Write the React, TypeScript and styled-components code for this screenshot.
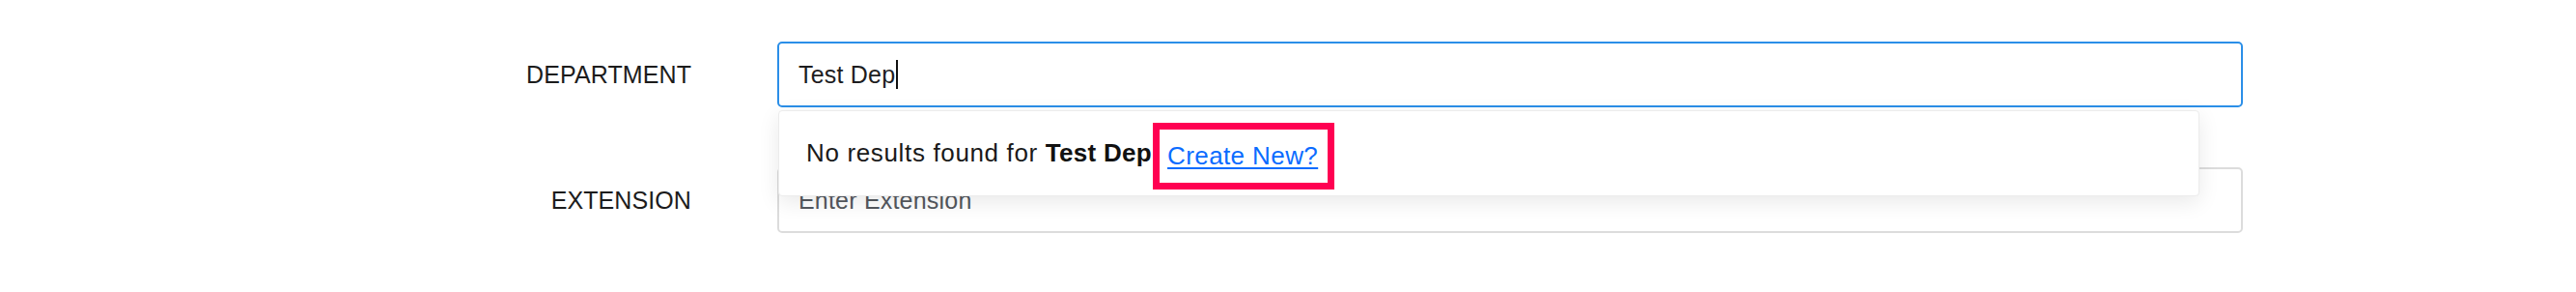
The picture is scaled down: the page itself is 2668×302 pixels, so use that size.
import React from 'react'
import { createGlobalStyle, styled } from 'styled-components'

const GlobalStyle = createGlobalStyle`
  html, body {
    margin: 0;
    padding: 0;
    background: #ffffff;
  }

  body {
    font-family: 'Liberation Sans', Arial, Helvetica, sans-serif;
    color: #212529;
  }
`

type FieldRowProps = {
  label: string
  children: React.ReactNode
}

const FieldRow = ({ label, children }: FieldRowProps) => (
  <>
    <Label>{label}</Label>
    <Field>{children}</Field>
  </>
)

const App = () => {
  const query = 'Test Dep'

  return (
    <>
      <GlobalStyle />
      <Form>
        <FieldRow label='DEPARTMENT'>
          <InputBox $focused>
            <span>{query}</span>
            <Caret />
          </InputBox>
          <Dropdown>
            <DropdownText>
              No results found for <strong>{query}</strong>
              <Highlight>
                <CreateLink href='#'>Create New?</CreateLink>
              </Highlight>
            </DropdownText>
          </Dropdown>
        </FieldRow>
        <FieldRow label='EXTENSION'>
          <InputBox>
            <Placeholder>Enter Extension</Placeholder>
          </InputBox>
        </FieldRow>
      </Form>
    </>
  )
}

const Form = styled.div`
  display: grid;
  grid-template-columns: 716px 1518px;
  grid-auto-rows: 68px;
  column-gap: 89px;
  row-gap: 62px;
  padding-top: 43px;
`

const Label = styled.div`
  align-self: center;
  text-align: right;
  font-size: 25px;
  letter-spacing: 0.1px;
  color: #1c1c1c;
`

const Field = styled.div`
  position: relative;
`

const InputBox = styled.div<{ $focused?: boolean }>`
  box-sizing: border-box;
  height: 68px;
  display: flex;
  align-items: center;
  padding: 0 20px;
  border: 2px solid ${props => (props.$focused ? '#2b8fe8' : '#dcdcdc')};
  border-radius: 5px;
  background: #ffffff;
  font-size: 25px;
  letter-spacing: 0.2px;
  color: #1d1d1f;
`

const Caret = styled.span`
  display: inline-block;
  width: 2px;
  height: 30px;
  margin-left: 1px;
  background: #111111;
`

const Placeholder = styled.span`
  color: #54585e;
`

const Dropdown = styled.div`
  position: absolute;
  z-index: 2;
  top: calc(100% + 3px);
  left: 1px;
  right: 45px;
  height: 89px;
  box-sizing: border-box;
  display: flex;
  align-items: center;
  padding-left: 28px;
  background: #ffffff;
  border: 1px solid #ececec;
  border-radius: 4px;
  box-shadow: 0 6px 22px rgba(0, 0, 0, 0.09);
`

const DropdownText = styled.div`
  display: flex;
  align-items: center;
  font-size: 26px;
  letter-spacing: 0.65px;
  color: #1a1a1a;
  white-space: pre;

  strong {
    font-weight: 700;
    letter-spacing: 0.3px;
    color: #111111;
  }
`

const Highlight = styled.span`
  display: inline-flex;
  align-items: center;
  box-sizing: border-box;
  height: 69px;
  margin-left: 1px;
  margin-top: 5px;
  padding: 0 10px 0 8px;
  border: 7px solid #ff0052;
`

const CreateLink = styled.a`
  color: #0b6cff;
  letter-spacing: 0.4px;
  text-decoration: underline;
  text-underline-offset: 3px;
  text-decoration-thickness: 2px;
`

export default App
